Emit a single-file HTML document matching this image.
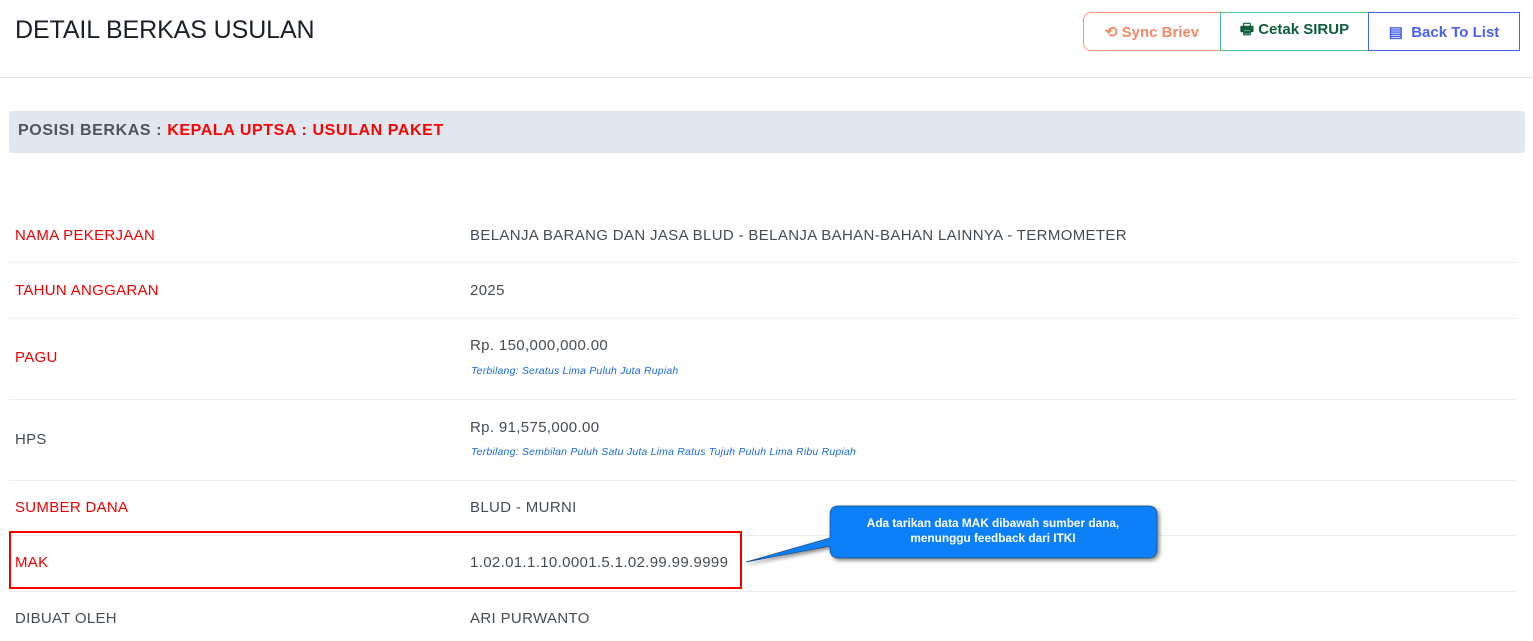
<!DOCTYPE html><html><head><style>
body{margin:0;width:1533px;height:641px;overflow:hidden;background:#fff;font-family:"Liberation Sans",sans-serif;position:relative}
.a{position:absolute;white-space:nowrap}
.h{left:15px;top:16px;font-size:25px;color:#1a1f2b;letter-spacing:-0.1px}
.btn{position:absolute;top:12px;height:39px;border:1px solid;box-sizing:border-box;font-weight:bold;font-size:15px;display:flex;align-items:center;justify-content:center;background:#fff}
.lbl{left:15px;font-size:15px;color:#e00;letter-spacing:0.3px}
.val{left:470px;font-size:15px;color:#444c55;letter-spacing:0.35px}
.sm{left:471px;font-size:10.5px;font-style:italic;color:#1a6bd8;letter-spacing:0.2px}
.ln{position:absolute;left:9px;width:1507px;height:1px;background:#eceef1}
</style></head><body>
<div class="a h">DETAIL BERKAS USULAN</div>
<div class="btn" style="left:1083px;width:138px;border-color:#f4967a;color:#f08a66;border-radius:8px 0 0 8px">⟲ Sync Briev</div>
<div class="btn" style="left:1220px;width:149px;border-color:#4cc08a;color:#0d5c3a">🖶 Cetak SIRUP</div>
<div class="btn" style="left:1368px;width:152px;border-color:#4466ee;color:#4a62e8">▤&nbsp; Back To List</div>
<div style="position:absolute;left:0;top:77px;width:1533px;height:1px;background:#e3e6ea"></div>
<div style="position:absolute;left:9px;top:111px;width:1516px;height:42px;background:#e1e7ef;border-radius:3px"></div>
<div class="a" style="left:18px;top:122px;font-size:16px;font-weight:bold;color:#4b5563;letter-spacing:0.6px">POSISI BERKAS : <span style="color:#f00">KEPALA UPTSA : USULAN PAKET</span></div>
<div class="a lbl" style="top:227px">NAMA PEKERJAAN</div><div class="a val" style="top:227px">BELANJA BARANG DAN JASA BLUD - BELANJA BAHAN-BAHAN LAINNYA - TERMOMETER</div>
<div class="ln" style="top:262px"></div>
<div class="a lbl" style="top:282px">TAHUN ANGGARAN</div><div class="a val" style="top:282px">2025</div>
<div class="ln" style="top:318px"></div>
<div class="a lbl" style="top:349px">PAGU</div><div class="a val" style="top:337px">Rp. 150,000,000.00</div><div class="a sm" style="top:365px">Terbilang: Seratus Lima Puluh Juta Rupiah</div>
<div class="ln" style="top:399px"></div>
<div class="a lbl" style="top:431px;color:#444c55">HPS</div><div class="a val" style="top:419px">Rp. 91,575,000.00</div><div class="a sm" style="top:446px">Terbilang: Sembilan Puluh Satu Juta Lima Ratus Tujuh Puluh Lima Ribu Rupiah</div>
<div class="ln" style="top:480px"></div>
<div class="a lbl" style="top:499px">SUMBER DANA</div><div class="a val" style="top:499px">BLUD - MURNI</div>
<div class="ln" style="top:535px"></div>
<div class="a lbl" style="top:554px">MAK</div><div class="a val" style="top:554px">1.02.01.1.10.0001.5.1.02.99.99.9999</div>
<div class="ln" style="top:591px"></div>
<div class="a lbl" style="top:610px;color:#444c55">DIBUAT OLEH</div><div class="a val" style="top:610px">ARI PURWANTO</div>
<div style="position:absolute;left:9px;top:531px;width:733px;height:58px;border:2px solid #e00;box-sizing:border-box"></div>
<svg style="position:absolute;left:740px;top:500px" width="430" height="80"><defs><filter id="s"><feDropShadow dx="2" dy="2" stdDeviation="2" flood-opacity="0.5"/></filter></defs>
<g filter="url(#s)"><path d="M98 6 H408 Q417 6 417 15 V49 Q417 58 408 58 H99 Q90 58 90 49 V46 L6 62 L90 38 V15 Q90 6 98 6Z" fill="#0a80f8" stroke="#1a4a80" stroke-width="0.7"/></g>
<text x="253" y="27" fill="#fff" font-size="11.8" font-weight="bold" text-anchor="middle" font-family="Liberation Sans">Ada tarikan data MAK dibawah sumber dana,</text>
<text x="253" y="42" fill="#fff" font-size="11.8" font-weight="bold" text-anchor="middle" font-family="Liberation Sans">menunggu feedback dari ITKI</text></svg>
</body></html>
